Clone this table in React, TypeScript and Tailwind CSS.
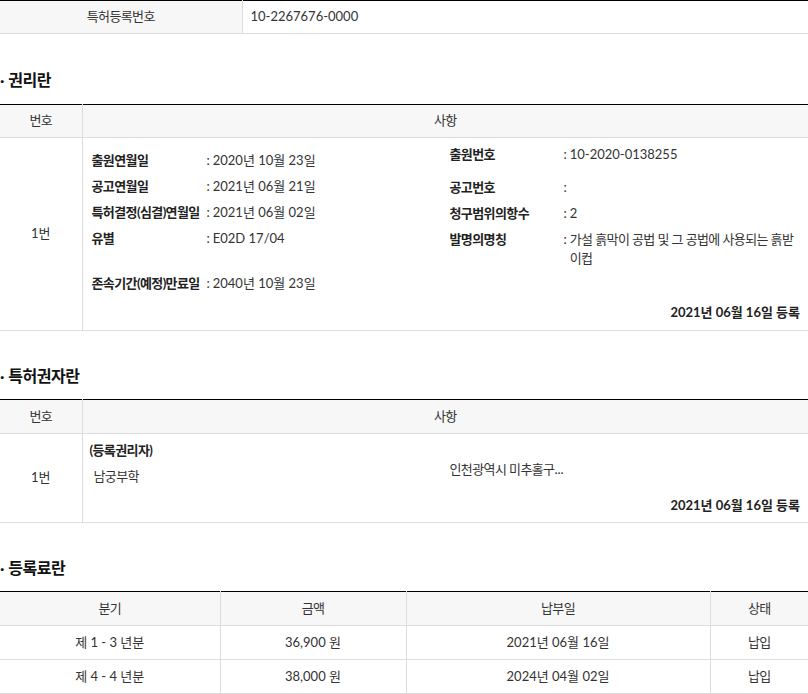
import React from "react";

const font = "font-['Lato','Noto_Sans_CJK_KR',sans-serif]";

function SectionTitle({ children, className = "mt-[34px] mb-[13px]" }: { children: React.ReactNode; className?: string }) {
  return (
    <h2 className={`${className} h-[22px] text-[16px] leading-[22px] font-bold text-[#111]`}>
      · <span className="tracking-[-0.5px]">{children}</span>
    </h2>
  );
}

function Row({
  label,
  value,
  labelW,
  className = "",
}: {
  label: string;
  value: React.ReactNode;
  labelW: string;
  className?: string;
}) {
  return (
    <div className={`flex leading-[19px] ${className}`}>
      <div className={`${labelW} shrink-0 whitespace-nowrap font-bold tracking-[-0.6px] text-[#222]`}>
        {label}
      </div>
      <div className="shrink-0 pr-[3px]">:</div>
      <div className="flex-1 break-all">{value}</div>
    </div>
  );
}

const K = ({ children }: { children: React.ReactNode }) => (
  <span className="tracking-[-0.6px]">{children}</span>
);

export default function App() {
  const fees = [
    { term: "제 1 - 3 년분", amount: "36,900 원", date: "2021년 06월 16일", state: "납입" },
    { term: "제 4 - 4 년분", amount: "38,000 원", date: "2024년 04월 02일", state: "납입" },
  ];

  return (
    <div className={`${font} w-[808px] bg-white text-[13px] text-[#333]`}>
      {/* Registration number */}
      <table className="w-full border-t border-black">
        <tbody>
          <tr className="h-[33px] border-b border-[#ddd]">
            <th className="w-[242px] border-r border-[#ddd] bg-[#f7f7f7] text-center font-normal">
              <K>특허등록번호</K>
            </th>
            <td className="pl-2">10-2267676-0000</td>
          </tr>
        </tbody>
      </table>

      {/* 권리란 */}
      <SectionTitle className="mt-[35px] mb-[13px]">권리란</SectionTitle>
      <table className="w-full border-t border-black">
        <thead>
          <tr className="h-[33px] border-b border-[#ddd] bg-[#f7f7f7]">
            <th className="w-[82px] border-r border-[#ddd] font-normal"><K>번호</K></th>
            <th className="font-normal"><K>사항</K></th>
          </tr>
        </thead>
        <tbody>
          <tr className="border-b border-[#ddd]">
            <td className="border-r border-[#ddd] text-center">1번</td>
            <td className="pb-[8px]">
              <div className="flex">
                <div className="w-[367px] pl-[9px] pt-[13px]">
                  <Row labelW="w-[115px]" label="출원연월일" value="2020년 10월 23일" />
                  <Row labelW="w-[115px]" className="mt-[7px]" label="공고연월일" value="2021년 06월 21일" />
                  <Row labelW="w-[115px]" className="mt-[7px]" label="특허결정(심결)연월일" value="2021년 06월 02일" />
                  <Row labelW="w-[115px]" className="mt-[7px]" label="유별" value="E02D 17/04" />
                  <Row labelW="w-[115px]" className="mt-[26px]" label="존속기간(예정)만료일" value="2040년 10월 23일" />
                </div>
                <div className="flex-1 pt-[7px] pr-[6px]">
                  <Row labelW="w-[114px]" label="출원번호" value="10-2020-0138255" />
                  <Row labelW="w-[114px]" className="mt-[14px]" label="공고번호" value="" />
                  <Row labelW="w-[114px]" className="mt-[7px]" label="청구범위의항수" value="2" />
                  <Row
                    labelW="w-[114px]"
                    className="mt-[7px]"
                    label="발명의명칭"
                    value={<K>가설 흙막이 공법 및 그 공법에 사용되는 흙받이컵</K>}
                  />
                </div>
              </div>
              <div className="mt-[10px] pr-2 text-right font-bold leading-[19px] text-[#222]">
                2021년 06월 16일 등록
              </div>
            </td>
          </tr>
        </tbody>
      </table>

      {/* 특허권자란 */}
      <SectionTitle className="mt-[34px] mb-[12px]">특허권자란</SectionTitle>
      <table className="w-full border-t border-black">
        <thead>
          <tr className="h-[34px] border-b border-[#ddd] bg-[#f7f7f7]">
            <th className="w-[82px] border-r border-[#ddd] font-normal"><K>번호</K></th>
            <th className="font-normal"><K>사항</K></th>
          </tr>
        </thead>
        <tbody>
          <tr className="border-b border-[#ddd]">
            <td className="border-r border-[#ddd] text-center">1번</td>
            <td className="pb-[7px]">
              <div className="flex leading-[19px]">
                <div className="w-[367px] pl-[7px] pt-[7px]">
                  <div className="font-bold tracking-[-0.6px] text-[#222]">(등록권리자)</div>
                  <div className="mt-[7px] pl-[4px]"><K>남궁부학</K></div>
                </div>
                <div className="flex-1 pt-[26px]"><K>인천광역시 미추홀구</K>...</div>
              </div>
              <div className="mt-[10px] pr-2 text-right font-bold leading-[19px] text-[#222]">
                2021년 06월 16일 등록
              </div>
            </td>
          </tr>
        </tbody>
      </table>

      {/* 등록료란 */}
      <SectionTitle className="mt-[34px] mb-[12px]">등록료란</SectionTitle>
      <table className="w-full border-t border-black text-center">
        <thead>
          <tr className="h-[34px] border-b border-[#ddd] bg-[#f7f7f7]">
            <th className="w-[220px] border-r border-[#ddd] font-normal"><K>분기</K></th>
            <th className="w-[186px] border-r border-[#ddd] font-normal"><K>금액</K></th>
            <th className="w-[304px] border-r border-[#ddd] font-normal"><K>납부일</K></th>
            <th className="font-normal"><K>상태</K></th>
          </tr>
        </thead>
        <tbody>
          {fees.map((f) => (
            <tr key={f.term} className="h-[34px] border-b border-[#ddd]">
              <td className="border-r border-[#ddd]">{f.term}</td>
              <td className="border-r border-[#ddd]">{f.amount}</td>
              <td className="border-r border-[#ddd]">{f.date}</td>
              <td><K>{f.state}</K></td>
            </tr>
          ))}
        </tbody>
      </table>
    </div>
  );
}
